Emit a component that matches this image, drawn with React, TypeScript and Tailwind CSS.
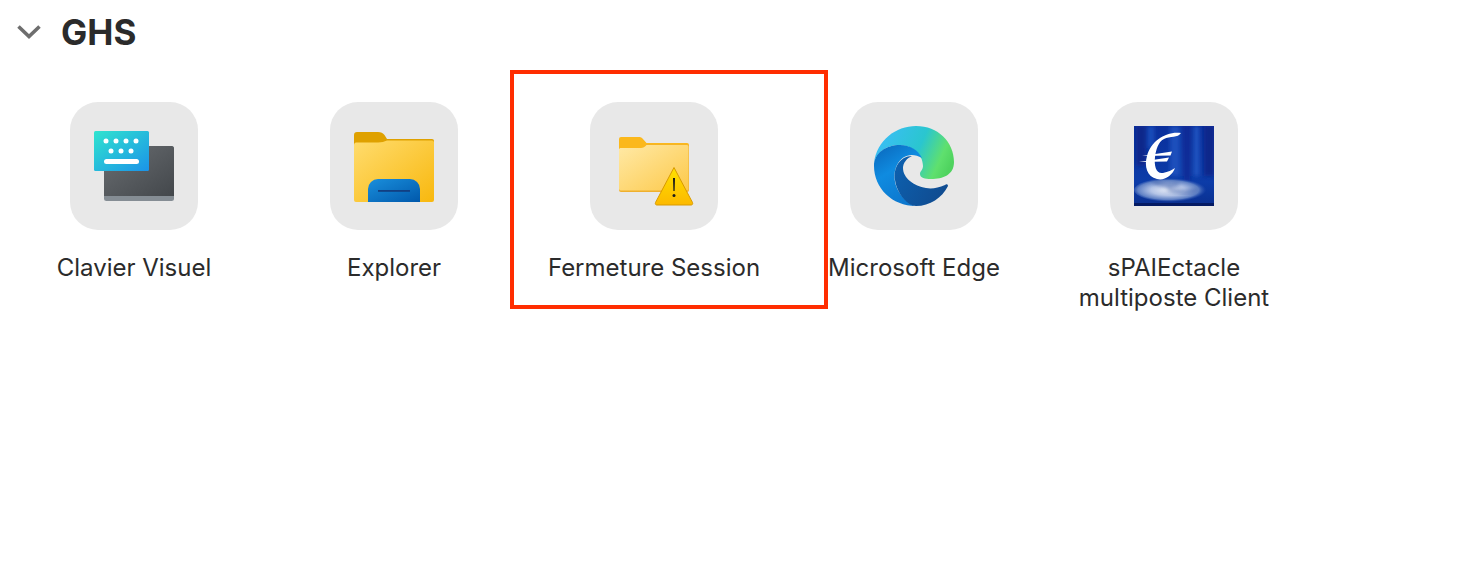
import React from "react";

function KeyboardIcon() {
  const dots = [
    [12, 15], [22, 15], [32, 15], [42, 15],
    [17, 25], [27, 25], [37, 25],
  ];
  return (
    <svg viewBox="0 0 80 80" className="w-20 h-20">
      <defs>
        <linearGradient id="kbDark" x1="0" y1="0" x2="1" y2="1">
          <stop offset="0" stopColor="#6a6e72" />
          <stop offset="1" stopColor="#43474b" />
        </linearGradient>
        <linearGradient id="kbBlue" x1="0" y1="0" x2="1" y2="1">
          <stop offset="0" stopColor="#30e4cf" />
          <stop offset="1" stopColor="#1b93e8" />
        </linearGradient>
      </defs>
      <rect x="10" y="20" width="70" height="55" rx="2.500" fill="#858d94" />
      <path d="M10 22.500a2.500 2.500 0 0 1 2.500-2.500h65a2.500 2.500 0 0 1 2.500 2.500V70H10z" fill="url(#kbDark)" />
      <rect x="0" y="5" width="55" height="40" rx="1.500" fill="url(#kbBlue)" />
      {dots.map(([x, y]) => (
        <circle key={`${x}-${y}`} cx={x} cy={y} r="2.500" fill="#fff" />
      ))}
      <rect x="10" y="33" width="35" height="5" rx="2.500" fill="#fff" />
    </svg>
  );
}

function ExplorerIcon() {
  return (
    <svg viewBox="0 0 80 80" className="w-20 h-20">
      <defs>
        <linearGradient id="exBody" x1="0" y1="0" x2="1" y2="1">
          <stop offset="0" stopColor="#ffdc6e" />
          <stop offset="1" stopColor="#f8b80e" />
        </linearGradient>
        <linearGradient id="exBlue" x1="0" y1="0" x2="1" y2="1">
          <stop offset="0" stopColor="#1a8fdc" />
          <stop offset="1" stopColor="#0058ab" />
        </linearGradient>
      </defs>
      <path d="M0 9a3 3 0 0 1 3-3h21c3 0 5 1 6.500 3l2.500 4h45a2 2 0 0 1 2 2v10H0z" fill="#dfa100" />
      <path d="M0 19c0-1.500 1-2.500 2-2.500h22c4 0 6-1 9-2h45a2 2 0 0 1 2 1.500v58a2 2 0 0 1-2 2H2a2 2 0 0 1-2-2z" fill="url(#exBody)" />
      <path d="M14 76V63a10 10 0 0 1 10-10h32a10 10 0 0 1 10 10v13z" fill="url(#exBlue)" />
      <rect x="24" y="64" width="32" height="1.800" fill="#123f82" />
    </svg>
  );
}

function SessionIcon() {
  return (
    <svg viewBox="0 0 80 80" className="w-20 h-20">
      <defs>
        <linearGradient id="seBody" x1="0" y1="0" x2="1" y2="1">
          <stop offset="0" stopColor="#ffe9a6" />
          <stop offset="1" stopColor="#fdc94a" />
        </linearGradient>
        <linearGradient id="seTri" x1="0" y1="0" x2="0" y2="1">
          <stop offset="0" stopColor="#ffe100" />
          <stop offset="1" stopColor="#fcb900" />
        </linearGradient>
      </defs>
      <path d="M5 13a2 2 0 0 1 2-2h18c1.500 0 2.500 .5 3.500 1.500l4 4.500H73a2 2 0 0 1 2 2v8H5z" fill="#fbb81c" />
      <path d="M5 23.500c0-1 1-1.500 2-1.500h20c2 0 4-1 5.500-3.500H73a2 2 0 0 1 2 2V64a2 2 0 0 1-2 2H7a2 2 0 0 1-2-2z" fill="#efb02e" />
      <path d="M5 23.500c0-1 1-1.500 2-1.500h20c2 0 4-1 5.500-3H73a1.500 1.500 0 0 1 1.500 1.500V63a1.500 1.500 0 0 1-1.500 1.500H7A2 2 0 0 1 5 63z" fill="url(#seBody)" />
      <path d="M60 41.500 78.500 76.500c.5 1.500 0 2.500-1.500 2.500H43c-1.500 0-2-1-1.500-2.500z" fill="url(#seTri)" stroke="#d99a00" strokeWidth="1" strokeLinejoin="round" />
      <path d="M59 52h2l-.4 13h-1.200z" fill="#1b1b1b" />
      <circle cx="60" cy="69.500" r="1.500" fill="#1b1b1b" />
    </svg>
  );
}

function EdgeIcon() {
  return (
    <svg viewBox="0 0 80 80" className="w-20 h-20">
      <defs>
        <linearGradient id="edTop" x1="0" y1="0.300" x2="1" y2="0.600">
          <stop offset="0" stopColor="#3bbdf8" />
          <stop offset="0.550" stopColor="#2ac6cf" />
          <stop offset="0.850" stopColor="#5fe06e" />
          <stop offset="1" stopColor="#4fd35f" />
        </linearGradient>
        <linearGradient id="edLeft" x1="0.200" y1="0" x2="0.700" y2="1">
          <stop offset="0" stopColor="#0b6cc0" />
          <stop offset="0.400" stopColor="#0f8be0" />
          <stop offset="1" stopColor="#0c75cc" />
        </linearGradient>
        <linearGradient id="edDark" x1="0" y1="0.300" x2="1" y2="0.800">
          <stop offset="0" stopColor="#0d5fad" />
          <stop offset="1" stopColor="#104a8e" />
        </linearGradient>
      </defs>
      <path d="M0 37C3 14 22 0 42 0c22 0 38 16 38 36 0 13-11 17-23 17-6 0-11-1-11-5 0-3 3-4 3-8 0-12-11-21-24-21C12 19 2 27 0 37z" fill="url(#edTop)" />
      <path d="M0 40C0 27 12 19 26 19c10 0 18 5 22 13-10-6-20-3-25 7-6 12-1 28 11 37 3 2 6 4 8 4C18 80 0 62 0 40z" fill="url(#edLeft)" />
      <path d="M38 30C26 30 19 42 21 54c2 14 13 26 21 26 14 0 26-8 32-20 0-2-2-2-3-1-7 3-13 4-19 3-12-2-23-10-23-20 0-5 4-10 9-12z" fill="url(#edDark)" />
    </svg>
  );
}

function EuroIcon() {
  return (
    <svg viewBox="0 0 80 80" className="w-20 h-20">
      <defs>
        <linearGradient id="euBg" x1="0" y1="0" x2="0" y2="1">
          <stop offset="0" stopColor="#0a2f9c" />
          <stop offset="0.700" stopColor="#0c3ca8" />
          <stop offset="1" stopColor="#0a2f8f" />
        </linearGradient>
        <radialGradient id="euPool" cx="0.450" cy="0.500" r="0.500">
          <stop offset="0" stopColor="#e6ebf6" />
          <stop offset="0.450" stopColor="#b4c4e6" />
          <stop offset="0.800" stopColor="#5f80c4" />
          <stop offset="1" stopColor="#2c55b4" stopOpacity="0" />
        </radialGradient>
        <filter id="euBlur" x="-20%" y="-20%" width="140%" height="140%"><feGaussianBlur stdDeviation="2" /></filter>
        <filter id="euSoft" x="-20%" y="-20%" width="140%" height="140%"><feGaussianBlur stdDeviation=".4" /></filter>
      </defs>
      <rect width="80" height="80" fill="url(#euBg)" />
      <g filter="url(#euBlur)">
        <rect x="2" y="0" width="10" height="40" fill="#08268a" />
        <rect x="14" y="0" width="6" height="22" fill="#1d50bd" />
        <rect x="36" y="0" width="10" height="50" fill="#1b50bc" />
        <rect x="50" y="0" width="6" height="55" fill="#0a2c95" />
        <rect x="60" y="0" width="5" height="50" fill="#2358c4" />
        <rect x="70" y="0" width="10" height="50" fill="#08268a" />
      </g>
      <ellipse cx="38" cy="64" rx="38" ry="12" fill="url(#euPool)" />
      <g filter="url(#euBlur)" fill="none" stroke="#3d5ea8" strokeLinecap="round">
        <path d="M20 56c8 3 18 3 24 2" strokeWidth="2.500" />
        <path d="M34 63c10 4 20 4 29 1" strokeWidth="2" />
      </g>
      <g filter="url(#euSoft)">
        <path d="M47 7C44 12 36 10 30 13 24 16 22 24 21 31 20 40 22 48 29 47 34 46 38 44 41 42 38 50 30 55 23 53 13 51 10 40 13 30 17 15 32 5 47 7Z" fill="#fff" />
        <path d="M8 30 38 25.500 36.500 29.500 8 30Z" fill="#fff" />
        <path d="M5 36 35 31.500 33 35.500 5 36Z" fill="#fff" />
      </g>
      <rect x="0" y="77" width="80" height="3" fill="#041a63" />
    </svg>
  );
}

const apps = [
  { label: "Clavier Visuel", icon: <KeyboardIcon /> },
  { label: "Explorer", icon: <ExplorerIcon /> },
  { label: "Fermeture Session", icon: <SessionIcon /> },
  { label: "Microsoft Edge", icon: <EdgeIcon /> },
  { label: "sPAIEctacle multiposte Client", icon: <EuroIcon /> },
];

export default function App() {
  return (
    <div className="relative w-[1474px] h-[580px] overflow-hidden bg-white font-['Inter',sans-serif] text-[#2b2b2b]">
      <div className="flex items-center h-[64px] pl-[17px]">
        <svg viewBox="0 0 24 14" className="w-6 h-[14px] text-[#6e6e6e]" fill="none" stroke="currentColor" strokeWidth="3.600">
          <path d="M1.500 1.500 12 11.500 22.500 1.500" />
        </svg>
        <h1 className="ml-5 text-[35px] leading-none font-bold">GHS</h1>
      </div>
      <div className="flex pl-1 pt-[38px]">
        {apps.map((a) => (
          <div key={a.label} className="flex flex-col items-center w-[260px]">
            <div className="flex items-center justify-center w-32 h-32 rounded-[28px] bg-[#e8e8e8]">{a.icon}</div>
            <div className="mt-[23px] w-[240px] text-center text-[24px] leading-[30px]">{a.label}</div>
          </div>
        ))}
      </div>
      <div className="absolute left-[510px] top-[70px] w-[318px] h-[239px] border-[4px] border-[#ff2d00]" />
    </div>
  );
}
